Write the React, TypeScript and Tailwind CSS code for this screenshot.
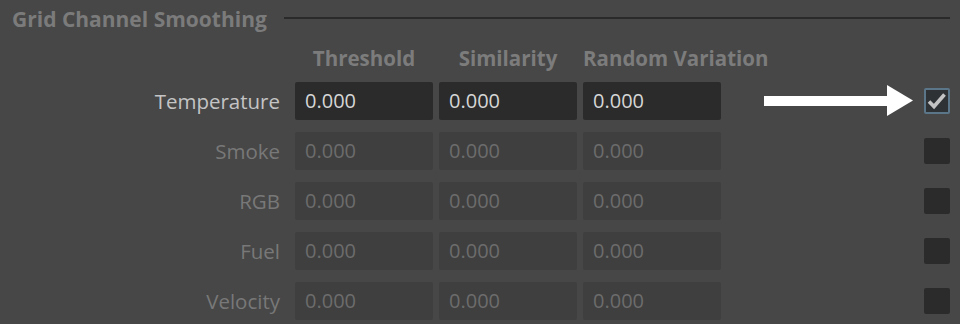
import React from 'react';

const rows = [
  { name: 'Temperature', enabled: true },
  { name: 'Smoke', enabled: false },
  { name: 'RGB', enabled: false },
  { name: 'Fuel', enabled: false },
  { name: 'Velocity', enabled: false },
];

const Arrow = () => (
  <svg width="149" height="32" viewBox="0 0 149 32" className="mr-[11px]">
    <rect x="0" y="11" width="124" height="10" fill="#ffffff" />
    <polygon points="123,0 149,15.5 123,31" fill="#ffffff" />
  </svg>
);

const CheckBox = ({ checked }: { checked: boolean }) =>
  checked ? (
    <div className="w-[26px] h-[26px] rounded-[2px] border-2 border-[#5b7689] bg-[#2e3235] flex items-center justify-center">
      <svg width="22" height="22" viewBox="0 0 22 22">
        <path d="M3 11.5 L8 16.5 L18.5 4.5" stroke="#c4c4c4" strokeWidth="3.6" fill="none" strokeLinejoin="miter" />
      </svg>
    </div>
  ) : (
    <div className="w-[26px] h-[26px] rounded-[2px] bg-[#2b2b2b]" />
  );

export default function App() {
  return (
    <div
      className="w-[960px] h-[324px] bg-[#474747] overflow-hidden"
      style={{ fontFamily: '"Open Sans", "Noto Sans", sans-serif' }}
    >
      {/* section header */}
      <div className="flex items-center h-[38px] pt-[2px] pl-[12px] pr-[10px]">
        <span className="text-[21px] font-bold text-[#7b7b7b] whitespace-nowrap">Grid Channel Smoothing</span>
        <div className="flex-1 ml-[17px] h-[2px] bg-[#2a2a2a] -mt-[4px]" />
      </div>

      {/* column headers */}
      <div className="flex items-center h-[40px] pl-[295px] text-[20.5px] font-bold text-[#7c7c7c] whitespace-nowrap">
        <div className="w-[138px] text-center">Threshold</div>
        <div className="w-[138px] ml-[6px] text-center">Similarity</div>
        <div className="w-[138px] ml-[6px]">Random Variation</div>
      </div>

      <div className="flex flex-col gap-[12px] mt-[4px]">
        {rows.map((r) => (
          <div key={r.name} className="flex items-center h-[38px] pr-[10px]">
            <div
              className={`w-[280px] text-right text-[20.5px] ${r.enabled ? 'text-[#c4c4c4]' : 'text-[#787878]'}`}
            >
              {r.name}
            </div>
            <div className="ml-[15px] flex gap-[6px]">
              {[0, 1, 2].map((i) => (
                <div
                  key={i}
                  className={`w-[138px] h-[38px] rounded-[2px] flex items-center pl-[10px] text-[20px] ${
                    r.enabled ? 'bg-[#2b2b2b] text-[#d6d6d6]' : 'bg-[#3f3f3f] text-[#6c6c6c]'
                  }`}
                >
                  0.000
                </div>
              ))}
            </div>
            <div className="flex-1 flex justify-end items-center">{r.enabled && <Arrow />}</div>
            <CheckBox checked={r.enabled} />
          </div>
        ))}
      </div>
    </div>
  );
}
